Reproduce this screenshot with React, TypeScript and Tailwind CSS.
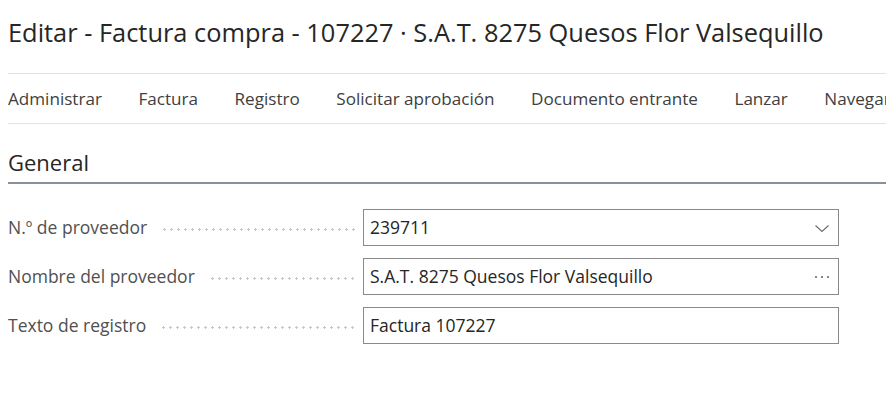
import React from 'react';

const actions = ['Administrar', 'Factura', 'Registro', 'Solicitar aprobación', 'Documento entrante', 'Lanzar', 'Navegar'];

const Field: React.FC<{ label: string; value: string; icon?: 'chevron' | 'dots' }> = ({ label, value, icon }) => (
  <div className="flex items-center h-[37px]">
    <div className="flex items-center w-[347px] shrink-0 text-[17.5px] text-[#505050]">
      <span className="whitespace-nowrap">{label}</span>
      <span className="flex-1 ml-[14px] mt-[3px] h-[3px] bg-[radial-gradient(circle,#c8c8c8_1px,transparent_1.3px)] bg-[length:7px_3px]" />
    </div>
    <div className="flex items-center w-[476px] h-[37px] ml-[8px] border border-[#8a8a8a] pl-[6px] pr-[8px] text-[17.5px] text-[#262626]">
      <span className="flex-1 whitespace-nowrap">{value}</span>
      {icon === 'chevron' && (
        <svg width="16" height="16" viewBox="0 0 16 16">
          <path d="M1.5 5.5 L8 11.5 L14.5 5.5" fill="none" stroke="#6b6b6b" strokeWidth="1.1" />
        </svg>
      )}
      {icon === 'dots' && (
        <svg width="16" height="6" viewBox="0 0 16 6">
          <circle cx="2" cy="3" r="1.1" fill="#6b6b6b" />
          <circle cx="8" cy="3" r="1.1" fill="#6b6b6b" />
          <circle cx="14" cy="3" r="1.1" fill="#6b6b6b" />
        </svg>
      )}
    </div>
  </div>
);

const App: React.FC = () => {
  return (
    <div className="w-[886px] h-[420px] bg-white overflow-hidden" style={{ fontFamily: '"Open Sans", "Noto Sans", sans-serif' }}>
      <div className="pl-[8px]">
        <h1 className="pt-[13px] h-[73px] text-[25.4px] text-[#262626] whitespace-nowrap">
          Editar - Factura compra - 107227 · S.A.T. 8275 Quesos Flor Valsequillo
        </h1>
        <div className="flex items-center h-[51px] border-y border-[#e1e3e6] gap-[36.5px] text-[17.1px] text-[#404040] whitespace-nowrap overflow-hidden">
          {actions.map(a => (
            <span key={a}>{a}</span>
          ))}
        </div>
        <div className="pt-[22px] h-[60px] border-b-2 border-[#8a909c] text-[22px] text-[#262626]">General</div>
        <div className="pt-[25px] flex flex-col gap-[12px]">
          <Field label="N.º de proveedor" value="239711" icon="chevron" />
          <Field label="Nombre del proveedor" value="S.A.T. 8275 Quesos Flor Valsequillo" icon="dots" />
          <Field label="Texto de registro" value="Factura 107227" />
        </div>
      </div>
    </div>
  );
};

export default App;
